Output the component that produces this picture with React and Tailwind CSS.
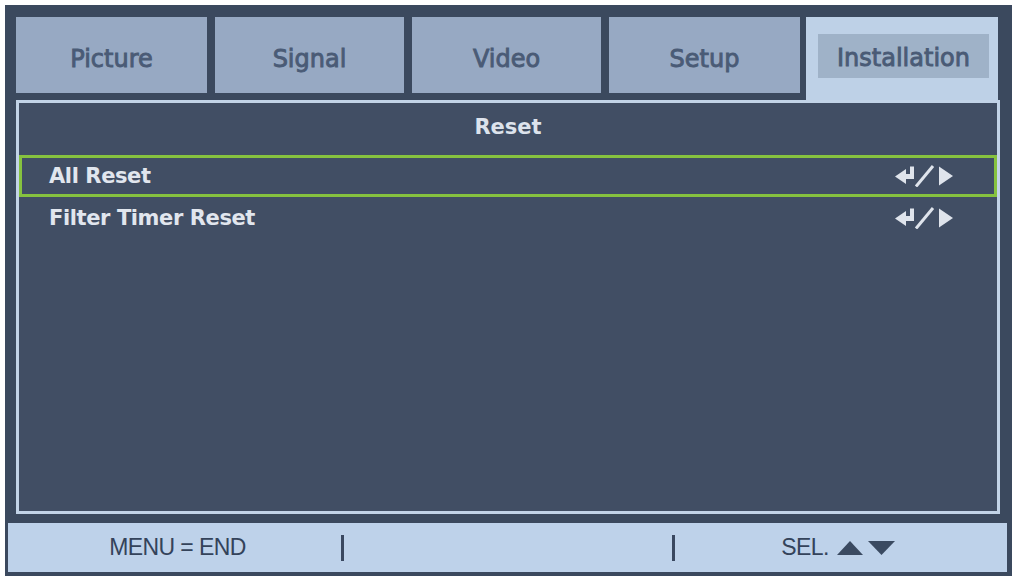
const tabs = [
  { label: "Picture", w: "w-[191px]" },
  { label: "Signal", w: "w-[189px]" },
  { label: "Video", w: "w-[189px]" },
  { label: "Setup", w: "w-[191px]" },
];

const EnterIcon = () => (
  <svg width="60" height="22" viewBox="0 0 60 22" fill="#dfe4ec">
    <polygon points="0,11.5 11,4 11,19" />
    <rect x="10" y="9" width="9" height="5" />
    <rect x="15" y="1.5" width="4" height="12.5" />
    <line x1="21" y1="21.5" x2="38" y2="1" stroke="#dfe4ec" strokeWidth="3" />
    <polygon points="44,1.5 58,11 44,20.5" />
  </svg>
);

const MenuRow = ({ label, active }) => (
  <div
    className={`flex items-center justify-between h-[42px] pl-[27px] pr-[39px] border-[3px] ${
      active ? "border-[#86c23f]" : "border-transparent"
    }`}
  >
    <span className="text-[21px] font-bold text-[#e1e6ee] tracking-[-0.4px] pt-[2px]">{label}</span>
    <EnterIcon />
  </div>
);

export default function App() {
  return (
    <div className="w-[1018px] h-[579px] bg-white pt-[5px] pl-[5px] font-['DejaVu_Sans',sans-serif]">
      <div className="w-[1007px] h-[571px] bg-[#3b495e] flex flex-col">
        {/* tabs */}
        <div className="flex h-[83px] mt-[12px] ml-[11px] gap-[8px]">
          {tabs.map((t) => (
            <div
              key={t.label}
              className={`${t.w} h-[76px] pt-[7px] bg-[#97a9c3] flex items-center justify-center text-[24px] text-[#4a5b76] [-webkit-text-stroke:0.9px_#4a5b76]`}
            >
              {t.label}
            </div>
          ))}
          <div className="w-[192px] h-full ml-[-2px] bg-[#bed1e7] pt-[17px] pl-[12px] pr-[9px]">
            <div className="h-[44px] pt-[4px] bg-[#9fb2c8] flex items-center justify-center text-[24px] text-[#4a5b76] [-webkit-text-stroke:0.9px_#4a5b76]">
              Installation
            </div>
          </div>
        </div>

        {/* panel */}
        <div className="ml-[11px] w-[984px] h-[414px] border-[3px] border-[#c2d3e7] bg-[#414e64] flex flex-col">
          <div className="h-[52px] pb-[3px] flex items-center justify-center text-[21px] font-bold text-[#dde3ec]">
            Reset
          </div>
          <MenuRow label="All Reset" active />
          <MenuRow label="Filter Timer Reset" />
        </div>

        {/* bottom bar */}
        <div className="ml-[3px] mt-[9px] w-[999px] h-[49px] bg-[#bed2ea] flex items-center text-[23px] text-[#34435a] font-['Liberation_Sans',sans-serif]">
          <div className="w-[333px] flex justify-center pl-[6px] tracking-[-0.6px]">MENU = END</div>
          <div className="w-[3px] h-[26px] bg-[#3a4860]" />
          <div className="w-[328px]" />
          <div className="w-[3px] h-[26px] bg-[#3a4860]" />
          <div className="flex-1 flex items-center justify-center gap-[8px] pr-[6px]">
            <span className="tracking-[-0.6px]">SEL.</span>
            <svg width="58" height="16" viewBox="0 0 58 16" fill="#3a4a61">
              <polygon points="0,15 13,1 26,15" />
              <polygon points="31,1 58,1 44.5,15" />
            </svg>
          </div>
        </div>
      </div>
    </div>
  );
}
